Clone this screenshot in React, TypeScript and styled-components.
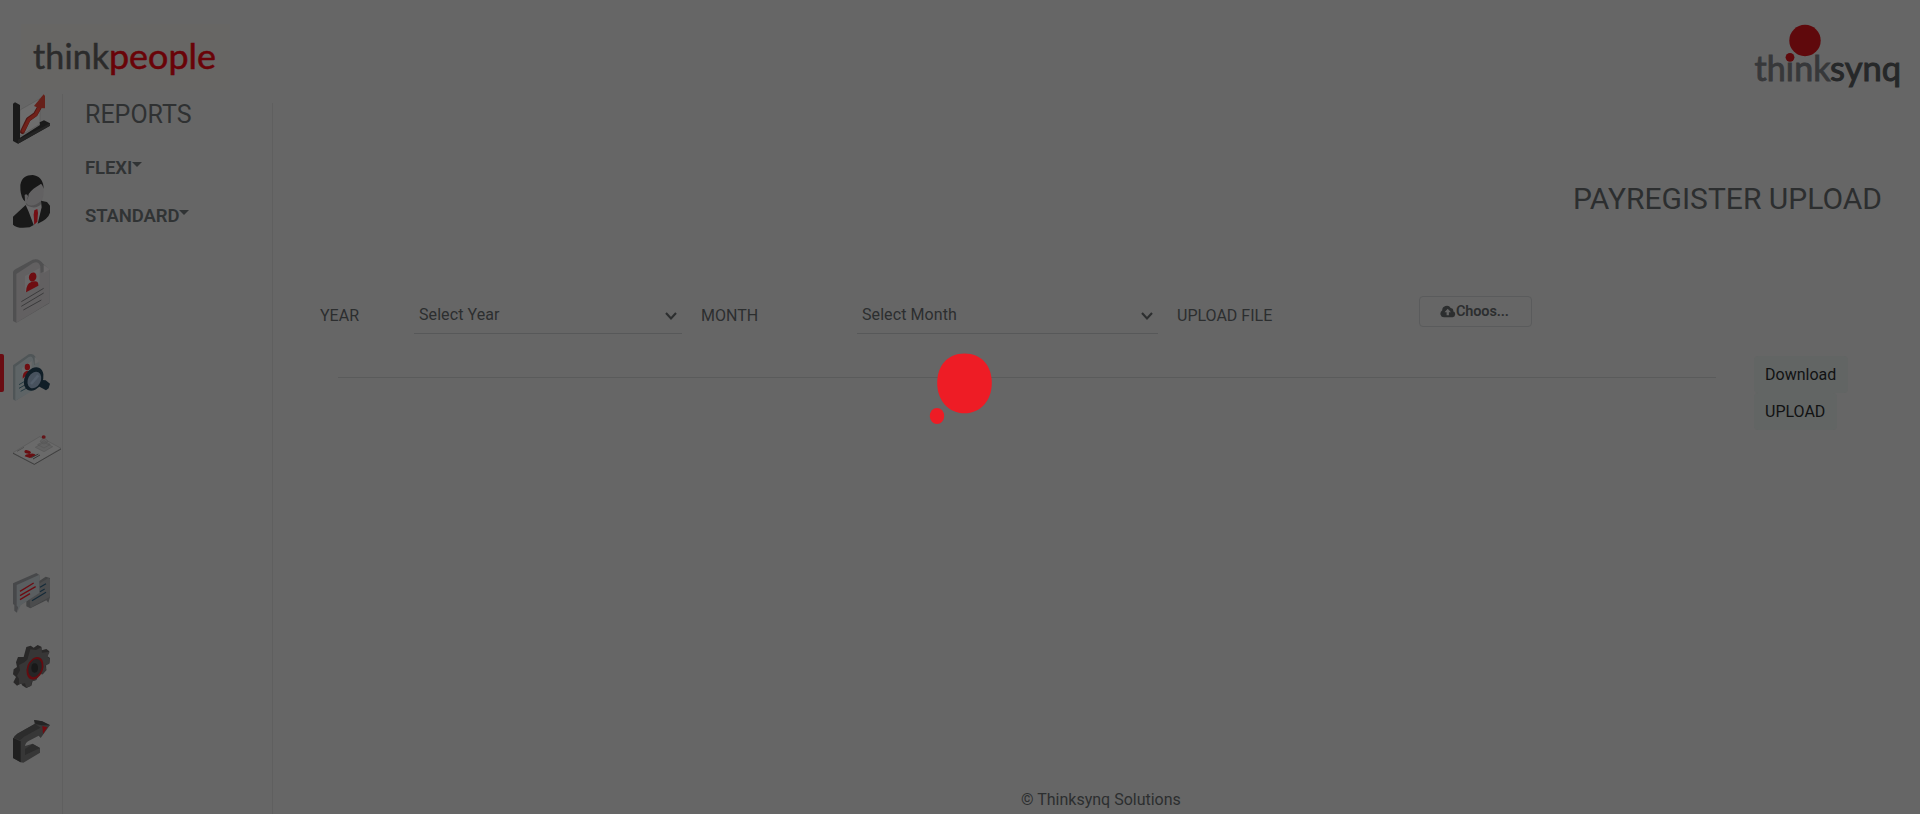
import React from 'react';
import styled, { createGlobalStyle } from 'styled-components';

const GlobalStyle = createGlobalStyle`
  *, *::before, *::after { box-sizing: border-box; }
  html, body { margin: 0; padding: 0; background: #666666; overflow: hidden; }
  body { font-family: Roboto, "Liberation Sans", sans-serif; font-size: 16px; line-height: 1.5; color: #2c2e2f; }
`;

const Page = styled.div`
  position: relative;
  display: flex;
  flex-direction: column;
  width: 100%;
  height: 814px;
  overflow: hidden;
`;

const Header = styled.header`
  display: flex;
  justify-content: space-between;
  height: 94px;
  flex: none;
  padding: 24px 19px 0 21px;
`;

const ProductLogo = styled.svg`
  width: 209px;
  height: 66px;
  background: #676664;
`;

const CompanyLogo = styled.svg`
  width: 147px;
  height: 68px;
`;

const Body = styled.div`
  display: flex;
  flex: 1;
  min-height: 0;
`;

const IconRail = styled.nav`
  display: flex;
  flex-direction: column;
  width: 63px;
  flex: none;
  border-right: 1px solid #5f5f5f;
`;

const RailItem = styled.a<{ $gap: number; $active?: boolean }>`
  display: flex;
  margin-top: ${(p) => p.$gap}px;
  padding-left: ${(p) => (p.$active ? 9 : 13)}px;
  &::before {
    content: "";
    display: ${(p) => (p.$active ? 'block' : 'none')};
    width: 4px;
    height: 38px;
    border-radius: 0 2px 2px 0;
    background: #6a0c12;
    margin-left: -9px;
    margin-right: 9px;
  }
  svg { display: block; flex: none; }
`;

const SubMenu = styled.aside`
  width: 210px;
  flex: none;
  margin-top: 9px;
  padding-left: 22px;
  border-right: 1px solid #5f5f5f;
`;

const MenuTitle = styled.h2`
  margin: -5px 0 0;
  font-size: 25px;
  line-height: 34px;
  font-weight: 400;
  color: #2f3132;
`;

const MenuGroup = styled.div`
  display: flex;
  align-items: flex-start;
  height: 28px;
  margin-top: 22px;
  font-size: 18.5px;
  line-height: 28px;
  font-weight: 600;
  letter-spacing: -0.1px;
  color: #303334;
  & + & { margin-top: 20px; }
`;

const Caret = styled.span`
  margin-top: 8px;
  border: 5px solid transparent;
  border-top: 5px solid #303334;
  border-bottom: 0;
`;

const Main = styled.main`
  display: flex;
  flex-direction: column;
  flex: 1;
  min-width: 0;
`;

const PageTitle = styled.h1`
  margin: 85px 38px 0 0;
  text-align: right;
  font-size: 30px;
  line-height: 40px;
  font-weight: 400;
`;

const FormRow = styled.div`
  display: flex;
  align-items: flex-start;
  height: 59px;
  margin-top: 77px;
  padding-left: 47px;
`;

const Label = styled.label<{ $width: number }>`
  width: ${(p) => p.$width}px;
  flex: none;
  padding-top: 8px;
  line-height: 24px;
`;

const Select = styled.div<{ $width: number; $after: number }>`
  display: flex;
  justify-content: space-between;
  width: ${(p) => p.$width}px;
  height: 38px;
  flex: none;
  margin-right: ${(p) => p.$after}px;
  padding: 7px 5px 0 5px;
  line-height: 24px;
  letter-spacing: 0.08px;
  border-bottom: 1px solid #575859;
  svg { margin-top: 7px; }
`;

const FileButton = styled.button`
  display: flex;
  align-items: center;
  width: 113px;
  height: 31px;
  padding: 0 0 1px 20px;
  border: 1px solid #5a5b5c;
  border-radius: 4px;
  background: transparent;
  color: #2c2e2f;
  font: 600 14.5px Roboto, sans-serif;
  letter-spacing: -0.15px;
`;

const ActionRow = styled.div`
  display: flex;
  align-items: flex-start;
  padding-left: 65px;
`;

const Divider = styled.hr`
  width: 1378px;
  height: 1px;
  margin: 22px 38px 0 0;
  border: 0;
  background: #5a5b5b;
`;

const Actions = styled.div`
  display: flex;
  flex-direction: column;
  align-items: flex-start;
  margin-top: 1px;
`;

const ActionButton = styled.button`
  height: 37px;
  padding: 0 12px 0 11px;
  border: 0;
  border-radius: 4px;
  background: #626564;
  color: #111213;
  font: 400 16px Roboto, sans-serif;
`;

const Footer = styled.footer`
  margin-top: auto;
  padding: 0 93px 2px 748px;
  line-height: 24px;
`;

const Loader = styled.svg`
  position: absolute;
  left: 929px;
  top: 352px;
  width: 64px;
  height: 73px;
`;

const ChartIcon = () => (
  <svg width="37" height="50" viewBox="39 282 111 150">
    <path d="M60 330 L120 296 V372 L60 408Z" fill="#6d6d6d" stroke="#4c4c4c" strokeWidth="1" />
    <path d="M39 311 L45 307 L60 315 V413 L120 375 L119 367 L132 361 L150 370 V377 L54 431 L39 423Z" fill="#1a1a1a" />
    <path d="M54 419 L150 370 V377 L54 431Z" fill="#232323" />
    <path d="M67 395 L85 358 L106 343 L118 322" fill="none" stroke="#4e1714" strokeWidth="14" strokeLinejoin="round" strokeLinecap="round" />
    <path d="M69 393 L87 358 L107 344 L119 320" fill="none" stroke="#702019" strokeWidth="10" strokeLinejoin="round" strokeLinecap="round" />
    <path d="M102 318 L131 283 L135 288 V325 L116 324Z" fill="#66201a" />
  </svg>
);

const PersonIcon = () => (
  <svg width="37" height="53" viewBox="39 525 111 159">
    <path d="M78 614 L86 635 L101 676 L113 671 L127 622 L124 602Z" fill="#6a696a" />
    <path d="M75 570 L78 607 Q90 620 106 619 Q118 612 126 602 Q132 588 131 550 L110 545 L84 560Z" fill="#626162" />
    <path d="M77 607 Q92 628 123 604 L124 611 Q107 631 79 616Z" fill="#525152" />
    <path d="M70 599 Q60 584 61 555 C65 533 78 525 98 525 C117 528 130 538 131 566 C127 555 124 548 119 554 C106 561 94 570 86 582 Q84 602 75 604Z" fill="#171717" />
    <path d="M74 585 Q80 579 84 588 L82 603 L75 604Z" fill="#626162" />
    <path d="M77 615 L39 650 V674 Q50 687 89 682 L101 675 L86 635Z M123 602 L141 606 L150 617 V638 Q145 657 113 671 L125 622Z" fill="#191919" />
    <path d="M103 631 L112 627 L114 638 L112 665 L103 674 L101 644Z" fill="#740e14" />
  </svg>
);

const DocumentIcon = () => (
  <svg width="37" height="64" viewBox="39 57 111 192">
    <path d="M39 96 Q40 91 46 88 L98 59 Q117 53 130 72 L148 88 V190 L49 248 L39 243Z" fill="#505051" />
    <path d="M49 102 L98 70 Q115 61 121 79 L122 99 L148 88 V188 L49 248Z" fill="#626061" />
    <path d="M131 74 L150 88 L131 99Z" fill="#6b696a" />
    <path d="M75 108 L119 84 V133 L75 157Z" fill="#696869" />
    <ellipse cx="98" cy="111" rx="11" ry="14" fill="#6e0e12" transform="rotate(18 98 111)" />
    <path d="M78 157 Q78 131 94 126 Q114 119 115 133 V137Z" fill="#6e0e12" />
    <path d="M64 185 L131 145 M64 199 L131 159 M70 210 L124 180" stroke="#333334" strokeWidth="2.5" />
  </svg>
);

const SearchIcon = () => (
  <svg width="37" height="47" viewBox="39 42 111 141">
    <path d="M39 76 L86 43 Q99 39 106 50 V143 L46 182 L39 178Z" fill="#4f5557" />
    <path d="M46 80 L86 51 Q97 45 100 60 L103 75 L118 65 V140 L46 182Z" fill="#5e6466" />
    <path d="M104 51 L117 63 L104 73Z" fill="#686a6b" />
    <path d="M66 84 L95 63 V103 L67 117Z" fill="#6a6a6b" />
    <ellipse cx="82" cy="81" rx="8" ry="10" fill="#6e0e12" />
    <path d="M68 116 Q67 95 81 92 L90 95Z" fill="#6e0e12" />
    <path d="M57 134 L74 124 M57 145 L80 132 M62 154 L84 142" stroke="#183039" strokeWidth="2.5" />
    <path d="M119 119 L137 121 L150 131 L146 145 L138 151 L113 137Z" fill="#101e27" />
    <ellipse cx="101" cy="117" rx="27" ry="37" fill="#101e27" transform="rotate(28 101 117)" />
    <ellipse cx="103" cy="120" rx="19" ry="26" fill="#48525e" transform="rotate(28 103 120)" />
    <path d="M93 132 L115 106" stroke="#535e6b" strokeWidth="8" />
  </svg>
);

const CardIcon = () => (
  <svg width="48" height="30" viewBox="39 285 144 90">
    <path d="M39 338 L119 290 L183 325 L103 373Z" fill="#6a6a6a" stroke="#535353" strokeWidth="1.5" />
    <path d="M39 340 L103 373 L183 327" fill="none" stroke="#383838" strokeWidth="2.5" />
    <path d="M106 322 L132 335 L158 320 L132 307Z M113 314 L132 324 L151 313 L132 302Z M120 304 L132 312 L144 304 L132 292Z" fill="#626262" stroke="#525252" strokeWidth="1.5" />
    <ellipse cx="131" cy="291" rx="6" ry="5" fill="#641519" />
    <ellipse cx="83" cy="336" rx="10" ry="5" fill="#680f12" transform="rotate(15 83 336)" />
    <path d="M74 349 Q77 342 88 342 Q102 338 108 346 L90 354Z" fill="#680f12" />
    <path d="M94 353 L115 342 M99 357 L120 345" stroke="#353535" strokeWidth="3" />
    <path d="M51 334 L72 322" stroke="#505050" strokeWidth="3" />
  </svg>
);

const ChatIcon = () => (
  <svg width="37" height="40" viewBox="39 69 111 120">
    <path d="M79 119 L137 80 L150 84 V141 L145 158 L139 151 L91 175 L79 169Z" fill="#424344" />
    <path d="M87 120 L145 84 L150 87 V140 L91 174Z" fill="#4b4c4d" />
    <path d="M39 100 L109 69 L118 75 V128 L55 169 L51 188 L43 182 V165 L39 162Z" fill="#47484a" />
    <path d="M50 105 L118 74 V129 L62 166 L54 183 V171 L50 167Z" fill="#5a5e60" />
    <path d="M60 124 L101 99 M60 137 L107 110 M60 149 L90 131" stroke="#6d0c12" strokeWidth="4" />
    <path d="M120 112 L138 101 M120 125 L134 117 M96 152 L138 127" stroke="#152b39" strokeWidth="3.5" />
  </svg>
);

const GearIcon = () => (
  <svg width="37" height="43" viewBox="39 285 111 129">
    <path d="M79 291 L92 287 L101 293 L113 285 L124 290 L125 301 L139 297 L148 304 L141 318 L150 324 L148 339 L138 344 L139 360 L128 373 L116 371 L109 390 L98 393 L94 407 L79 414 L66 406 L64 400 L51 407 L40 397 L48 381 L39 373 L41 358 L51 351 L48 337 L54 321 L71 321Z" fill="#292828" />
    <path d="M91 298 L108 300 L124 292 L126 308 L149 305 L142 321 L150 326 L148 341 L136 347 L139 361 L127 373 L114 371 L108 390 L96 394 L93 407 L79 413 L75 400 L57 403 L57 386 L51 377 L60 361 L57 345 L73 337 L82 329Z" fill="#373636" />
    <ellipse cx="105" cy="355" rx="24" ry="35" fill="#630c10" transform="rotate(20 105 355)" />
    <ellipse cx="105" cy="354" rx="19" ry="28" fill="#262526" transform="rotate(20 105 354)" />
    <ellipse cx="104" cy="354" rx="10" ry="14" fill="#181818" />
  </svg>
);

const ReturnIcon = () => (
  <svg width="37" height="43" viewBox="39 90 111 129">
    <path d="M39 147 Q41 137 52 131 L104 102 L102 90 L127 94 L150 105 L122 144 L116 137 L87 152 Q76 157 75 168 L98 161 L120 174 V188 L70 218 L62 217 L39 204Z" fill="#373737" />
    <path d="M39 144 L62 154 V217 L39 204Z" fill="#202020" />
    <path d="M52 131 L105 101 L121 113 L72 140 L60 151 L41 143Z M75 177 L98 162 L120 174 L75 195Z" fill="#2c2c2c" />
    <path d="M102 90 L126 94 L150 106 L125 106 L107 102Z" fill="#242424" />
    <path d="M127 108 L142 112 L129 132Z" fill="#740b10" />
  </svg>
);

const RAIL = [
  { id: 'chart', Icon: ChartIcon, gap: 0 },
  { id: 'person', Icon: PersonIcon, gap: 31 },
  { id: 'document', Icon: DocumentIcon, gap: 31 },
  { id: 'search', Icon: SearchIcon, gap: 31, active: true },
  { id: 'card', Icon: CardIcon, gap: 34 },
  { id: 'chat', Icon: ChatIcon, gap: 108 },
  { id: 'settings', Icon: GearIcon, gap: 32 },
  { id: 'return', Icon: ReturnIcon, gap: 32 },
];

const Chevron = () => (
  <svg width="12" height="12" viewBox="0 0 12 12">
    <path d="M1 3 L6 8.5 L11 3" fill="none" stroke="#2c2e2f" strokeWidth="2.1" />
  </svg>
);

const CloudUpload = () => (
  <svg width="16" height="13" viewBox="0 0 16 13">
    <path d="M4 12.3 A3.6 3.6 0 0 1 2.2 5.6 A4.6 4.6 0 0 1 10.7 3 A2.7 2.7 0 0 1 13.2 6.2 A3.2 3.2 0 0 1 12.6 12.3Z" fill="#2c2e2f" />
    <path d="M7.7 3.8 L11 7.2 H8.9 V10.3 H6.6 V7.2 H4.5Z" fill="#666666" />
  </svg>
);

export default function App() {
  return (
    <Page>
      <GlobalStyle />
      <Header>
        <ProductLogo viewBox="21 24 209 66" fontFamily="Lato, sans-serif" fontSize="34">
          <text x="33" y="68.5" textLength="76" fill="#2b2b2b" stroke="#2b2b2b" strokeWidth="0.5">think</text>
          <text x="109" y="68.5" textLength="107" lengthAdjust="spacingAndGlyphs" fill="#690308" stroke="#690308" strokeWidth="0.5">people</text>
        </ProductLogo>
        <CompanyLogo viewBox="1754 24 147 68" fontFamily="Lato, sans-serif" fontSize="34">
          <circle cx="1805" cy="40.5" r="15.7" fill="#5f090c" />
          <circle cx="1790" cy="57.3" r="4.4" fill="#5f090c" />
          <text x="1754.5" y="80.8" textLength="76" fill="#37383a" stroke="#37383a" strokeWidth="0.9">thınk</text>
          <text x="1830" y="80.8" textLength="71" lengthAdjust="spacingAndGlyphs" fill="#262829" stroke="#262829" strokeWidth="1">synq</text>
        </CompanyLogo>
      </Header>
      <Body>
        <IconRail>
          {RAIL.map(({ id, Icon, gap, active }) => (
            <RailItem key={id} $gap={gap} $active={active}>
              <Icon />
            </RailItem>
          ))}
        </IconRail>
        <SubMenu>
          <MenuTitle>REPORTS</MenuTitle>
          <MenuGroup>FLEXI<Caret /></MenuGroup>
          <MenuGroup>STANDARD<Caret /></MenuGroup>
        </SubMenu>
        <Main>
          <PageTitle>PAYREGISTER UPLOAD</PageTitle>
          <FormRow>
            <Label $width={94}>YEAR</Label>
            <Select $width={268} $after={19}>Select Year<Chevron /></Select>
            <Label $width={156}>MONTH</Label>
            <Select $width={301} $after={19}>Select Month<Chevron /></Select>
            <Label $width={242}>UPLOAD FILE</Label>
            <FileButton><CloudUpload />Choos...</FileButton>
          </FormRow>
          <ActionRow>
            <Divider />
            <Actions>
              <ActionButton>Download</ActionButton>
              <ActionButton>UPLOAD</ActionButton>
            </Actions>
          </ActionRow>
          <Footer>© Thinksynq Solutions</Footer>
        </Main>
      </Body>
      <Loader viewBox="929 352 64 73">
        <path d="M964.5 353.4 C982 353.4 991.8 366 991.8 383 C991.8 401 980 413.3 964.5 413.3 C949 413.3 937.2 401 937.2 383 C937.2 366 947 353.4 964.5 353.4Z" fill="#ee1c25" />
        <ellipse cx="937" cy="416" rx="7.2" ry="8" fill="#ee1c25" />
      </Loader>
    </Page>
  );
}
